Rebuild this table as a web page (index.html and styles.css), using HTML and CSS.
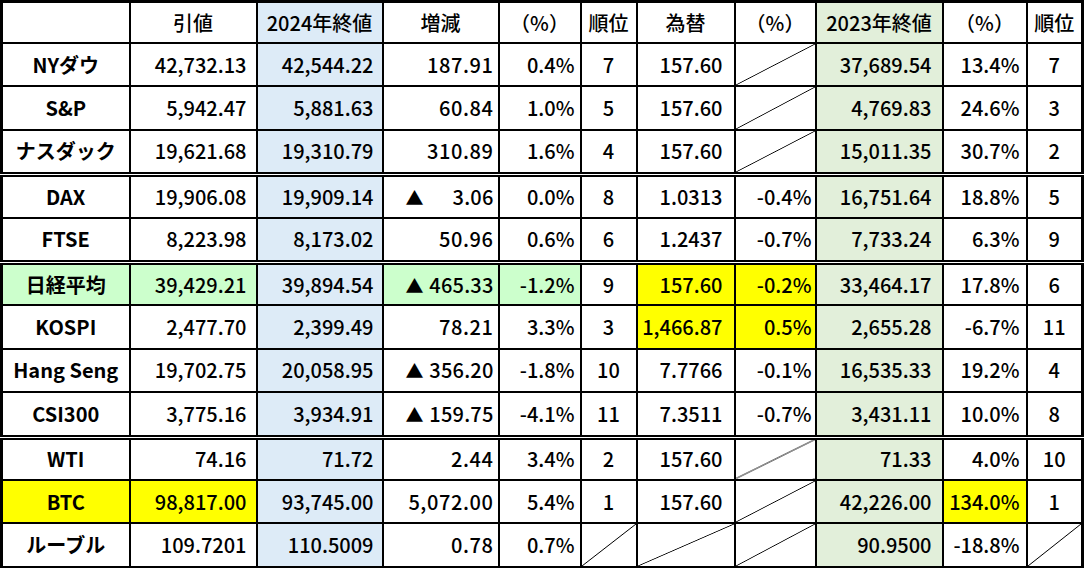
FILE: index.html
```html
<!DOCTYPE html>
<html lang="ja">
<head>
<meta charset="utf-8">
<title>指数比較</title>
<link rel="stylesheet" href="styles.css">
</head>
<body>
<table class="sheet">
  <colgroup>
    <col class="c-name"><col class="c-close"><col class="c-y24"><col class="c-diff"><col class="c-pct">
    <col class="c-rank"><col class="c-fx"><col class="c-fxpct"><col class="c-y23"><col class="c-pct23"><col class="c-rank23">
  </colgroup>
  <thead>
    <tr>
      <th></th><th>引値</th><th class="blue">2024年終値</th><th>増減</th><th>（%）</th><th>順位</th>
      <th>為替</th><th>（%）</th><th class="green">2023年終値</th><th>（%）</th><th>順位</th>
    </tr>
  </thead>
  <tbody>
    <tr>
      <td class="name">NYダウ</td><td class="num p-close">42,732.13</td><td class="num blue p-y24">42,544.22</td>
      <td class="num p-diff">187.91</td><td class="num p-pct">0.4%</td><td class="rank">7</td>
      <td class="num p-fx">157.60</td><td class="diag"></td><td class="num green p-y23">37,689.54</td>
      <td class="num p-pct23">13.4%</td><td class="rank">7</td>
    </tr>
    <tr>
      <td class="name">S&amp;P</td><td class="num p-close">5,942.47</td><td class="num blue p-y24">5,881.63</td>
      <td class="num p-diff">60.84</td><td class="num p-pct">1.0%</td><td class="rank">5</td>
      <td class="num p-fx">157.60</td><td class="diag"></td><td class="num green p-y23">4,769.83</td>
      <td class="num p-pct23">24.6%</td><td class="rank">3</td>
    </tr>
    <tr>
      <td class="name">ナスダック</td><td class="num p-close">19,621.68</td><td class="num blue p-y24">19,310.79</td>
      <td class="num p-diff">310.89</td><td class="num p-pct">1.6%</td><td class="rank">4</td>
      <td class="num p-fx">157.60</td><td class="diag"></td><td class="num green p-y23">15,011.35</td>
      <td class="num p-pct23">30.7%</td><td class="rank">2</td>
    </tr>
    <tr class="sep">
      <td class="name">DAX</td><td class="num p-close">19,906.08</td><td class="num blue p-y24">19,909.14</td>
      <td class="num p-diff"><div class="neg"><span class="tri">▲</span><span class="val">3.06</span></div></td><td class="num p-pct">0.0%</td><td class="rank">8</td>
      <td class="num p-fx">1.0313</td><td class="num p-fxpct">-0.4%</td><td class="num green p-y23">16,751.64</td>
      <td class="num p-pct23">18.8%</td><td class="rank">5</td>
    </tr>
    <tr>
      <td class="name">FTSE</td><td class="num p-close">8,223.98</td><td class="num blue p-y24">8,173.02</td>
      <td class="num p-diff">50.96</td><td class="num p-pct">0.6%</td><td class="rank">6</td>
      <td class="num p-fx">1.2437</td><td class="num p-fxpct">-0.7%</td><td class="num green p-y23">7,733.24</td>
      <td class="num p-pct23">6.3%</td><td class="rank">9</td>
    </tr>
    <tr class="sep">
      <td class="name lime">日経平均</td><td class="num lime p-close">39,429.21</td><td class="num blue p-y24">39,894.54</td>
      <td class="num lime p-diff"><div class="neg"><span class="tri">▲</span><span class="val">465.33</span></div></td><td class="num lime p-pct">-1.2%</td><td class="rank">9</td>
      <td class="num yellow p-fx">157.60</td><td class="num yellow p-fxpct">-0.2%</td><td class="num green p-y23">33,464.17</td>
      <td class="num p-pct23">17.8%</td><td class="rank">6</td>
    </tr>
    <tr>
      <td class="name">KOSPI</td><td class="num p-close">2,477.70</td><td class="num blue p-y24">2,399.49</td>
      <td class="num p-diff">78.21</td><td class="num p-pct">3.3%</td><td class="rank">3</td>
      <td class="num yellow p-fx">1,466.87</td><td class="num yellow p-fxpct">0.5%</td><td class="num green p-y23">2,655.28</td>
      <td class="num p-pct23">-6.7%</td><td class="rank">11</td>
    </tr>
    <tr>
      <td class="name">Hang Seng</td><td class="num p-close">19,702.75</td><td class="num blue p-y24">20,058.95</td>
      <td class="num p-diff"><div class="neg"><span class="tri">▲</span><span class="val">356.20</span></div></td><td class="num p-pct">-1.8%</td><td class="rank">10</td>
      <td class="num p-fx">7.7766</td><td class="num p-fxpct">-0.1%</td><td class="num green p-y23">16,535.33</td>
      <td class="num p-pct23">19.2%</td><td class="rank">4</td>
    </tr>
    <tr>
      <td class="name">CSI300</td><td class="num p-close">3,775.16</td><td class="num blue p-y24">3,934.91</td>
      <td class="num p-diff"><div class="neg"><span class="tri">▲</span><span class="val">159.75</span></div></td><td class="num p-pct">-4.1%</td><td class="rank">11</td>
      <td class="num p-fx">7.3511</td><td class="num p-fxpct">-0.7%</td><td class="num green p-y23">3,431.11</td>
      <td class="num p-pct23">10.0%</td><td class="rank">8</td>
    </tr>
    <tr class="sep">
      <td class="name">WTI</td><td class="num p-close">74.16</td><td class="num blue p-y24">71.72</td>
      <td class="num p-diff">2.44</td><td class="num p-pct">3.4%</td><td class="rank">2</td>
      <td class="num p-fx">157.60</td><td class="diag"></td><td class="num green p-y23">71.33</td>
      <td class="num p-pct23">4.0%</td><td class="rank">10</td>
    </tr>
    <tr>
      <td class="name yellow">BTC</td><td class="num yellow p-close">98,817.00</td><td class="num blue p-y24">93,745.00</td>
      <td class="num p-diff">5,072.00</td><td class="num p-pct">5.4%</td><td class="rank">1</td>
      <td class="num p-fx">157.60</td><td class="diag"></td><td class="num green p-y23">42,226.00</td>
      <td class="num yellow p-pct23">134.0%</td><td class="rank">1</td>
    </tr>
    <tr>
      <td class="name">ルーブル</td><td class="num p-close">109.7201</td><td class="num blue p-y24">110.5009</td>
      <td class="num p-diff">0.78</td><td class="num p-pct">0.7%</td><td class="diag"></td>
      <td class="diag"></td><td class="diag"></td><td class="num green p-y23">90.9500</td>
      <td class="num p-pct23">-18.8%</td><td class="diag"></td>
    </tr>
  </tbody>
</table>
</body>
</html>
```

FILE: styles.css
```css
html, body {
  margin: 0;
  padding: 0;
  background: #ffffff;
}

.sheet {
  border-collapse: collapse;
  table-layout: fixed;
  width: 1084px;
  border: 3px solid #000;
  font-family: "Noto Sans CJK JP", "Noto Sans", sans-serif;
  font-size: 20px;
  font-weight: 500;
  color: #000;
}

.c-name { width: 128px; }
.c-close { width: 127px; }
.c-y24 { width: 126px; }
.c-diff { width: 116px; }
.c-pct { width: 82px; }
.c-rank { width: 56px; }
.c-fx { width: 98px; }
.c-fxpct { width: 81px; }
.c-y23 { width: 127px; }
.c-pct23 { width: 84px; }
.c-rank23 { width: 56px; }

.sheet th,
.sheet td {
  border: 2px solid #000;
  padding: 0;
  height: 41.4px;
  line-height: 24px;
  white-space: nowrap;
  overflow: hidden;
}

.sheet th {
  font-weight: 500;
  text-align: center;
  height: 39px;
}

.sheet tr.sep td {
  border-top: 5px double #000;
  height: 39.4px;
}

.name {
  text-align: center;
  font-weight: 700;
}

.num {
  text-align: right;
}

.rank {
  text-align: center;
}

.p-close { padding-right: 9px !important; }
.p-y24 { padding-right: 8px !important; }
.p-diff { padding-right: 4px !important; letter-spacing: 0.6px; }
.p-pct { padding-right: 5px !important; }
.p-fx { padding-right: 11px !important; }
.p-fxpct { padding-right: 3px !important; }
.p-y23 { padding-right: 10px !important; }
.p-pct23 { padding-right: 6px !important; }

.neg {
  display: flex;
  justify-content: space-between;
  align-items: center;
  padding-left: 22px;
}

.tri {
  font-size: 18px;
  letter-spacing: 0;
}

.neg .val {
  letter-spacing: 0.2px;
}

.blue { background-color: #ddebf7; }
.green { background-color: #e2efda; }
.lime { background-color: #ccffcc; }
.yellow { background-color: #ffff00; }

.diag {
  background-image: linear-gradient(to bottom right,
    transparent calc(50% - 0.8px),
    #000 50%,
    transparent calc(50% + 0.8px));
}
```
